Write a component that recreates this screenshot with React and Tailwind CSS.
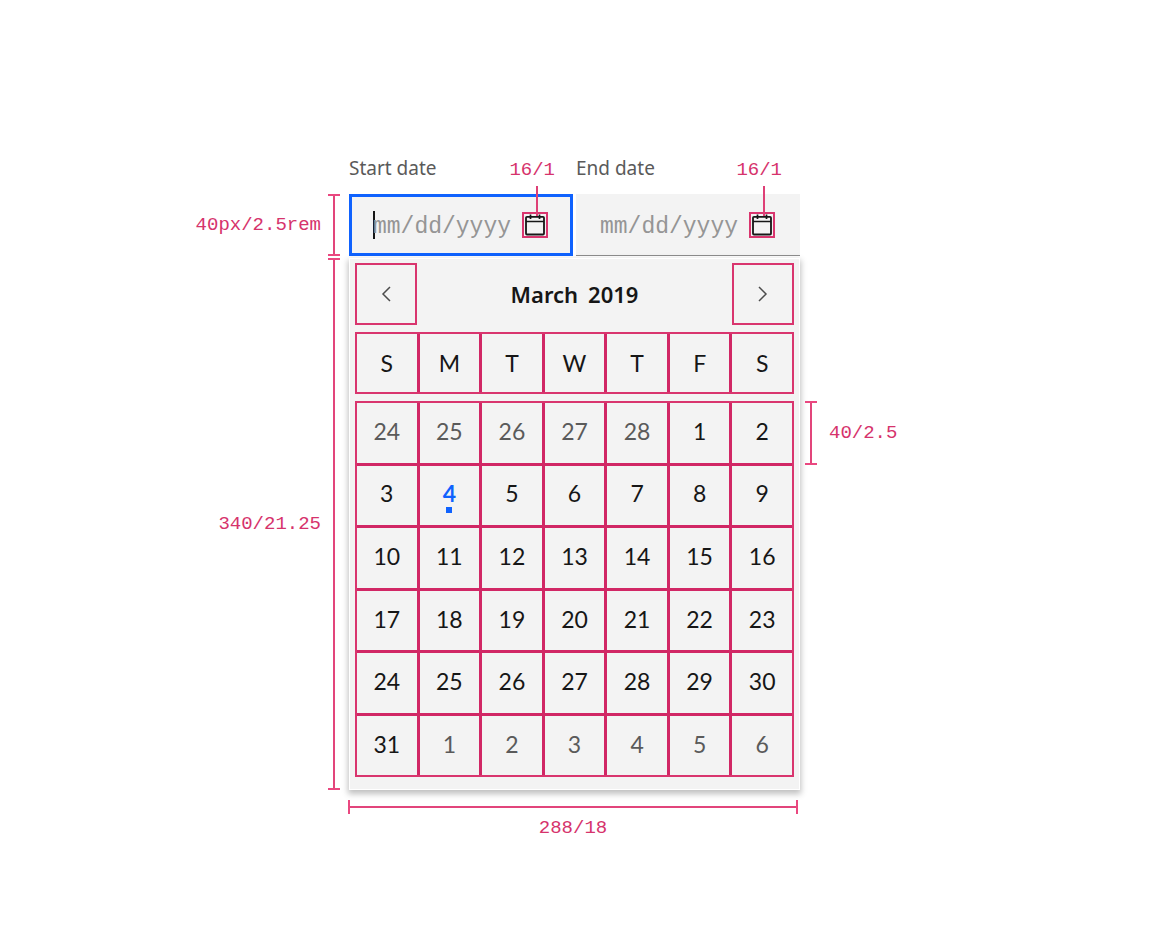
import React from "react";

const WEEKDAYS = [
  ["S", "Sunday"],
  ["M", "Monday"],
  ["T", "Tuesday"],
  ["W", "Wednesday"],
  ["T", "Thursday"],
  ["F", "Friday"],
  ["S", "Saturday"],
];

const WEEKS = [
  [24, 25, 26, 27, 28, 1, 2],
  [3, 4, 5, 6, 7, 8, 9],
  [10, 11, 12, 13, 14, 15, 16],
  [17, 18, 19, 20, 21, 22, 23],
  [24, 25, 26, 27, 28, 29, 30],
  [31, 1, 2, 3, 4, 5, 6],
];

const isOutside = (week, day) => (week === 0 && day > 20) || (week === 5 && day < 10);

function CalendarIcon() {
  return (
    <svg viewBox="0 0 22 22" className="size-[22px]" fill="none" stroke="#161616" aria-hidden="true">
      <rect x="2" y="2.8" width="18" height="17.7" rx="1" strokeWidth="1.8" />
      <path d="M2 7.5H20" strokeWidth="1.5" />
      <path d="M6.5 0.5V5M15.5 0.5V5" strokeWidth="1.7" />
    </svg>
  );
}

function Chevron({ d }) {
  return (
    <svg viewBox="0 0 16 16" className="size-4" fill="none" stroke="#4c4c4c" strokeWidth="1.5" aria-hidden="true">
      <path d={d} />
    </svg>
  );
}

function Measure({ children }) {
  return (
    <span className="font-['Liberation_Mono',monospace] text-[19px] leading-6 whitespace-nowrap text-[#d6336c]">
      {children}
    </span>
  );
}

function VerticalBracket() {
  return (
    <div className="flex w-3 shrink-0 justify-center self-stretch border-y-2 border-[#ea4880]">
      <div className="w-0.5 bg-[#e2457b]" />
    </div>
  );
}

function DateField({ id, label, focused }) {
  return (
    <div className="min-w-0 flex-1">
      <div className="flex h-9 items-start justify-between pr-[18px]">
        <label htmlFor={id} className="font-['Noto_Sans',sans-serif] text-[19px] leading-5 whitespace-nowrap text-[#5a5a5a]">
          {label}
        </label>
        <Measure>16/1</Measure>
      </div>
      <div
        className={
          focused
            ? "flex h-[62px] items-center border-3 border-[#0f62fe] bg-[#f3f3f3] pr-[22px] pl-[21px]"
            : "flex h-[62px] items-center border-b border-[#8d8d8d] bg-[#f3f3f3] pr-[25px] pl-6"
        }
      >
        {focused && <span className="-mr-0.5 h-7 w-0.5 shrink-0 bg-[#161616]" />}
        <input
          id={id}
          type="text"
          placeholder="mm/dd/yyyy"
          className="min-w-0 flex-1 bg-transparent pt-1 font-['Liberation_Mono',monospace] text-[23px] leading-7 text-[#161616] outline-none placeholder:text-[#959595]"
        />
        <button
          type="button"
          aria-label={`Open calendar for ${label}`}
          className="relative flex size-[26px] shrink-0 items-center justify-center border-2 border-[#d9356e]"
        >
          <CalendarIcon />
          <span className="absolute bottom-5 left-3 h-[30px] w-0.5 bg-[#de3f76]" />
        </button>
      </div>
    </div>
  );
}

export default function App() {
  return (
    <main className="min-h-screen bg-white pt-[158px] pr-1 font-[Lato,sans-serif]">
      <div className="grid grid-cols-[1fr_452px_1fr]">
        <div className="mt-9 flex h-[62px] items-center justify-end gap-[7px] pr-2">
          <Measure>40px/2.5rem</Measure>
          <VerticalBracket />
        </div>
        <div className="flex gap-[3px] pl-px">
          <DateField id="start-date" label="Start date" focused />
          <DateField id="end-date" label="End date" />
        </div>
        <div />

        <div className="mt-0.5 flex items-center justify-end gap-[7px] pr-2">
          <Measure>340/21.25</Measure>
          <VerticalBracket />
        </div>
        <section
          aria-label="Calendar"
          className="mt-0.5 ml-px border border-white bg-[#f3f3f3] px-[5px] pt-1 pb-3 shadow-[0_3px_6px_1px_rgba(0,0,0,0.25)]"
        >
          <header className="flex items-center justify-between">
            <button
              type="button"
              aria-label="Previous month"
              className="flex size-[62px] items-center justify-center border-2 border-[#d9356e]"
            >
              <Chevron d="M12 1L5 8L12 15" />
            </button>
            <h2 className="flex gap-2.5 font-['Noto_Sans',sans-serif] text-[22px] leading-7 font-semibold text-[#161616]">
              <span>March</span>
              <span>2019</span>
            </h2>
            <button
              type="button"
              aria-label="Next month"
              className="flex size-[62px] items-center justify-center border-2 border-[#d9356e]"
            >
              <Chevron d="M4 1L11 8L4 15" />
            </button>
          </header>
          <table className="mt-[7px] block text-[23px] leading-7 text-[#161616]">
            <thead className="block">
              <tr className="grid grid-cols-7 gap-[3px] border-2 border-[#d9356e] bg-[#d12765]">
                {WEEKDAYS.map(([short, full]) => (
                  <th
                    key={full}
                    scope="col"
                    abbr={full}
                    className="flex h-[58px] items-center justify-center bg-[#f3f3f3] font-normal"
                  >
                    {short}
                  </th>
                ))}
              </tr>
            </thead>
            <tbody className="mt-[7px] grid grid-cols-7 gap-[3px] border-2 border-[#d9356e] bg-[#d12765]">
              {WEEKS.map((days, week) => (
                <tr key={week} className="contents">
                  {days.map((day) => {
                    const today = week === 1 && day === 4;
                    return (
                      <td key={day} className="flex aspect-square bg-[#f3f3f3]">
                        <button
                          type="button"
                          aria-current={today ? "date" : undefined}
                          className={
                            today
                              ? "relative flex-1 pb-1 font-bold text-[#0f62fe]"
                              : isOutside(week, day)
                                ? "flex-1 pb-1 text-[#5a5a5a]"
                                : "flex-1 pb-1"
                          }
                        >
                          {day}
                          {today && (
                            <span className="absolute bottom-3 left-1/2 size-1.5 -translate-x-1/2 bg-[#0f62fe]" />
                          )}
                        </button>
                      </td>
                    );
                  })}
                </tr>
              ))}
            </tbody>
          </table>
        </section>
        <div className="pt-[145px] pl-[5px]">
          <div className="flex h-16 items-center gap-3">
            <VerticalBracket />
            <Measure>40/2.5</Measure>
          </div>
        </div>

        <div className="col-start-2 mt-2.5 pr-0.5">
          <div className="flex h-3.5 items-center border-x-2 border-[#ea4880]">
            <div className="h-0.5 flex-1 bg-[#e2457b]" />
          </div>
          <div className="mt-px text-center">
            <Measure>288/18</Measure>
          </div>
        </div>
      </div>
    </main>
  );
}
